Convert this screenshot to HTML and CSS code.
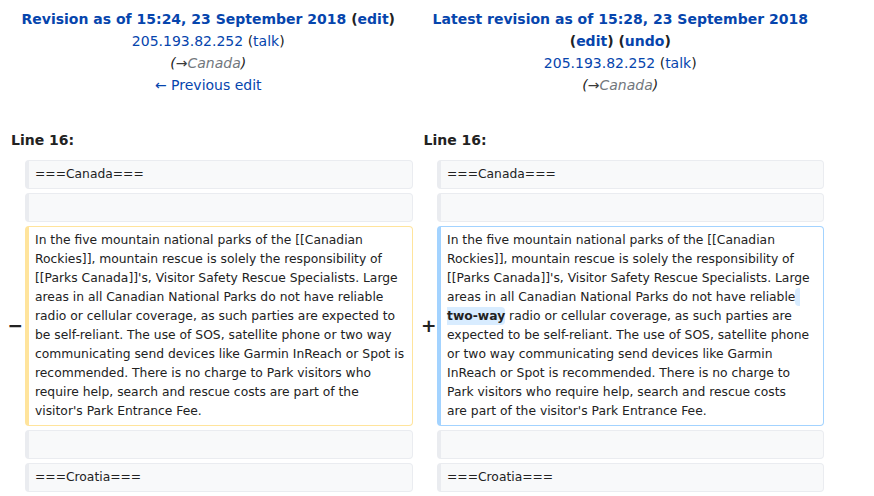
FILE: index.html
```html
<!DOCTYPE html>
<html lang="en">
<head>
<meta charset="utf-8">
<title>Diff</title>
<link rel="stylesheet" href="styles.css">
</head>
<body>
<table class="diff">
  <colgroup>
    <col class="col-marker-l">
    <col class="col-content-l">
    <col class="col-marker-r">
    <col class="col-content-r">
  </colgroup>
  <tbody>
    <tr class="titles">
      <td colspan="2" class="title">
        <div><strong><a href="#">Revision as of 15:24, 23 September 2018</a> (<a href="#">edit</a>)</strong></div>
        <div><a href="#">205.193.82.252</a> (<a href="#">talk</a>)</div>
        <div><span class="comment">(<span class="arrow">→</span><span class="autocomment">Canada</span>)</span></div>
        <div><a href="#">← Previous edit</a></div>
      </td>
      <td colspan="2" class="title">
        <div><strong><a href="#">Latest revision as of 15:28, 23 September 2018</a> (<a href="#">edit</a>) (<a href="#">undo</a>)</strong></div>
        <div><a href="#">205.193.82.252</a> (<a href="#">talk</a>)</div>
        <div><span class="comment">(<span class="arrow">→</span><span class="autocomment">Canada</span>)</span></div>
      </td>
    </tr>
    <tr>
      <td colspan="2" class="lineno">Line 16:</td>
      <td colspan="2" class="lineno">Line 16:</td>
    </tr>
    <tr>
      <td class="marker"></td>
      <td class="line context">===Canada===</td>
      <td class="marker"></td>
      <td class="line context">===Canada===</td>
    </tr>
    <tr>
      <td class="marker"></td>
      <td class="line context"><br></td>
      <td class="marker"></td>
      <td class="line context"><br></td>
    </tr>
    <tr>
      <td class="marker"><span class="sign sign-minus">−</span></td>
      <td class="line deleted">In the five mountain national parks of the [[Canadian Rockies]], mountain rescue is solely the responsibility of [[Parks Canada]]'s, Visitor Safety Rescue Specialists. Large areas in all Canadian National Parks do not have reliable radio or cellular coverage, as such parties are expected to be self-reliant. The use of SOS, satellite phone or two way communicating send devices like Garmin InReach or Spot is recommended. There is no charge to Park visitors who require help, search and rescue costs are part of the visitor's Park Entrance Fee.</td>
      <td class="marker"><span class="sign sign-plus">+</span></td>
      <td class="line added">In the five mountain national parks of the [[Canadian Rockies]], mountain rescue is solely the responsibility of [[Parks Canada]]'s, Visitor Safety Rescue Specialists. Large areas in all Canadian National Parks do not have reliable<ins class="diffchange"> two-way</ins> radio or cellular coverage, as such parties are expected to be self-reliant. The use of SOS, satellite phone or two way communicating send devices like Garmin InReach or Spot is recommended. There is no charge to Park visitors who require help, search and rescue costs<br>are part of the visitor's Park Entrance Fee.</td>
    </tr>
    <tr>
      <td class="marker"></td>
      <td class="line context"><br></td>
      <td class="marker"></td>
      <td class="line context"><br></td>
    </tr>
    <tr>
      <td class="marker"></td>
      <td class="line context">===Croatia===</td>
      <td class="marker"></td>
      <td class="line context">===Croatia===</td>
    </tr>
  </tbody>
</table>
</body>
</html>
```
FILE: styles.css
```css
html, body {
  margin: 0;
  padding: 0;
  background: #ffffff;
}

body {
  font-family: "DejaVu Sans", sans-serif;
  font-size: 14px;
  color: #222222;
}

a {
  color: #0645ad;
  text-decoration: none;
}

.diff {
  width: 828px;
  table-layout: fixed;
  border-collapse: separate;
  border-spacing: 4px;
  margin: 0;
}

.col-marker-l { width: 17px; }
.col-content-l { width: 387.5px; }
.col-marker-r { width: 16.5px; }
.col-content-r { width: 387px; }

.diff td {
  padding: 0;
}

.diff td.title {
  text-align: center;
  vertical-align: top;
  line-height: 22px;
  padding: 4px 7px 25px;
}

.comment {
  font-style: italic;
  color: #222222;
}

.comment .arrow {
  color: #3a3a3a;
}

.comment .autocomment {
  color: #72777d;
}

.diff td.lineno {
  font-weight: bold;
  line-height: 22px;
  padding: 4px 7px 5px;
}

.diff td.marker {
  font-weight: bold;
  font-size: 18.5px;
  line-height: 1.2;
  text-align: right;
  padding: 0;
  overflow: visible;
  white-space: nowrap;
}

.sign {
  display: inline-block;
}

.sign-minus {
  margin-right: -2px;
}

.sign-plus {
  margin-right: -3.5px;
}

.diff td.line {
  font-size: 12.32px;
  line-height: 19px;
  vertical-align: top;
  white-space: pre-wrap;
  word-wrap: break-word;
  padding: 4px 6px;
  border-style: solid;
  border-width: 1px 1px 1px 4px;
  border-radius: 4px;
  color: #222222;
}

.diff td.context {
  background: #f8f9fa;
  border-color: #eaecf0;
}

.diff td.deleted {
  background: #ffffff;
  border-color: #ffe49c;
}

.diff td.added {
  background: #ffffff;
  border-color: #a3d3ff;
}

.diffchange {
  text-decoration: none;
  font-weight: bold;
  background: #d8ecff;
  border-radius: 4px;
  padding: 2px 0;
}
```
